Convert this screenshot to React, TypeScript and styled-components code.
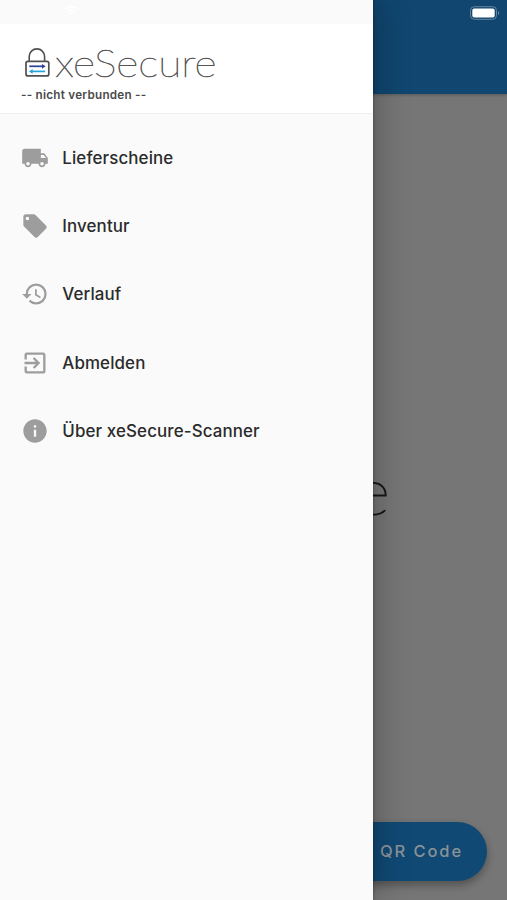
import React from "react";
import styled, { createGlobalStyle } from "styled-components";
import { MdLocalShipping, MdLocalOffer, MdHistory, MdExitToApp, MdInfo, MdWifi } from "react-icons/md";

const GlobalStyle = createGlobalStyle`
  * { box-sizing: border-box; }
  body { margin: 0; overflow: hidden; font-family: Inter, "Liberation Sans", sans-serif; }
`;

const Screen = styled.div`
  position: relative;
  width: 507px;
  height: 900px;
  overflow: hidden;
  background: #767676;
`;

const Page = styled.main`
  display: flex;
  flex-direction: column;
  height: 100%;
`;

const AppBar = styled.header`
  display: flex;
  justify-content: flex-end;
  height: 94px;
  padding: 5px 6px 0 0;
  background: #10466f;
  box-shadow: 0 1px 3px rgba(0, 0, 0, 0.25);
`;

const Hero = styled.section`
  flex: 1;
  display: flex;
  align-items: center;
  justify-content: center;
  padding: 46px 2px 0 0;
`;

const Footer = styled.footer`
  display: flex;
  justify-content: flex-end;
  padding: 0 20px 19px;
`;

const ScanButton = styled.button`
  width: 230px;
  height: 59px;
  padding: 0 24px 2px 0;
  border: 0;
  border-radius: 30px;
  background: #104974;
  box-shadow: 0 4px 8px rgba(0, 0, 0, 0.32);
  color: #8b9297;
  font: 500 16.5px Inter, sans-serif;
  letter-spacing: 1.9px;
  text-align: right;
`;

const Drawer = styled.aside`
  position: absolute;
  inset: 0 auto 0 0;
  width: 372.5px;
  background: #fafafa;
  box-shadow: 0 0 3px rgba(0, 0, 0, 0.35), 4px 0 30px rgba(0, 0, 0, 0.25);
`;

const StatusBar = styled.div`
  height: 24px;
  padding: 3px 0 0 64px;
  color: #fff;
  font-size: 13px;
`;

const DrawerHeader = styled.div`
  height: 90px;
  padding: 22px 21px 0;
  background: #fff;
  border-bottom: 1px solid #efefef;
`;

const Brand = styled.div`
  display: flex;
  height: 40px;
  padding-left: 3px;
`;

const Wordmark = styled.svg`
  display: block;
  overflow: visible;
  font-family: Lato, sans-serif;
  font-weight: 200;
`;

const Connection = styled.div`
  margin-top: 2px;
  color: #4a4a4a;
  font-size: 11.7px;
  font-weight: 600;
  line-height: 15px;
  letter-spacing: 0.25px;
`;

const Menu = styled.nav`
  display: flex;
  flex-direction: column;
  padding-top: 9.4px;
`;

const MenuItem = styled.a`
  display: flex;
  align-items: center;
  gap: 13.3px;
  height: 68.4px;
  padding-left: 21px;
  color: #2b2b2b;
  font-size: 16.9px;
  font-weight: 500;
  letter-spacing: 0.13px;
  white-space: nowrap;

  svg { flex: none; color: #9d9d9d; }
`;

const items = [
  { label: "Lieferscheine", icon: MdLocalShipping },
  { label: "Inventur", icon: MdLocalOffer },
  { label: "Verlauf", icon: MdHistory },
  { label: "Abmelden", icon: MdExitToApp },
  { label: "Über xeSecure-Scanner", icon: MdInfo },
];

const Padlock = () => (
  <svg width="28" height="32" viewBox="0 0 28 32" fill="none">
    <path d="M5.2 15V10.6a7.7 7.7 0 0 1 15.4 0V15" stroke="#505050" strokeWidth="1.6" />
    <rect x="2" y="15.3" width="22.8" height="14.6" rx="2" stroke="#505050" strokeWidth="1.7" />
    <path d="M5.3 20.3H19" stroke="#2b3f96" strokeWidth="1.7" />
    <path d="m18 17.9 3.6 2.4-3.6 2.4z" fill="#2b3f96" />
    <path d="M8 25.4h13.2" stroke="#25a5dc" strokeWidth="1.7" />
    <path d="m8.6 23-3.6 2.4 3.6 2.4z" fill="#25a5dc" />
  </svg>
);

const Battery = () => (
  <svg width="32" height="17" viewBox="0 0 32 17" fill="none">
    <rect x="1.5" y="1.7" width="26" height="12.6" rx="3.8" stroke="#6785a0" strokeWidth="1" />
    <rect x="3.3" y="3.4" width="22.4" height="9.2" rx="2" fill="#fff" />
    <path d="M29 6.2c1.7.3 1.7 3.3 0 3.6z" fill="#6785a0" />
  </svg>
);

export default function App() {
  return (
    <>
      <GlobalStyle />
      <Screen>
        <Page>
          <AppBar><Battery /></AppBar>
          <Hero>
            <Wordmark width="270" height="70" fill="#171717" stroke="#171717" strokeWidth="1.2">
              <text x="0" y="69" fontSize="66" textLength="272" lengthAdjust="spacingAndGlyphs">xeSecure</text>
            </Wordmark>
          </Hero>
          <Footer><ScanButton>QR Code</ScanButton></Footer>
        </Page>
        <Drawer>
          <StatusBar><MdWifi size={15} /></StatusBar>
          <DrawerHeader>
            <Brand>
              <Padlock />
              <Wordmark width="165" height="36" fill="#555" stroke="#555" strokeWidth="0.6">
                <text x="3" y="30.5" fontSize="38.5" textLength="161.5" lengthAdjust="spacingAndGlyphs">xeSecure</text>
              </Wordmark>
            </Brand>
            <Connection>-- nicht verbunden --</Connection>
          </DrawerHeader>
          <Menu>
            {items.map(({ label, icon: Icon }) => (
              <MenuItem key={label}><Icon size={28} />{label}</MenuItem>
            ))}
          </Menu>
        </Drawer>
      </Screen>
    </>
  );
}
